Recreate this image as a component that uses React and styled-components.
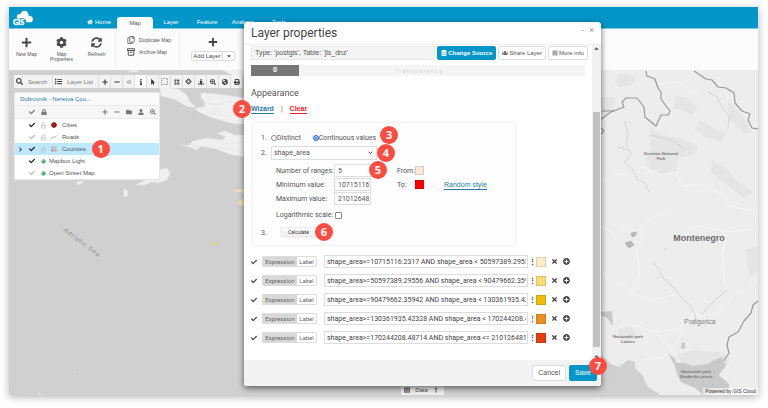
import { useState } from 'react';
import styled, { createGlobalStyle } from 'styled-components';
import {
    FaBars, FaCaretDown, FaCaretUp, FaCheck, FaCog, FaDatabase, FaFolder, FaGlobeAmericas,
    FaHome, FaInfo, FaList, FaLock, FaLongArrowAltUp, FaMinus, FaMousePointer, FaPlus,
    FaPlusCircle, FaPrint, FaRegCopy, FaSearch, FaSearchPlus, FaStreetView, FaSyncAlt, FaTh, FaTimes,
    FaUser, FaUsers, FaDrawPolygon, FaAngleDoubleLeft, FaChevronRight
} from 'react-icons/fa';

const TABS = ['Home', 'Map', 'Layer', 'Feature', 'Analysis', 'Tools'];

const MAP_TOOLS = [
    { name: 'Zoom in', icon: <FaPlus /> },
    { name: 'Zoom out', icon: <FaMinus /> },
    { name: 'Previous view', icon: <FaAngleDoubleLeft color='#999' /> },
    { name: 'Info', icon: <FaInfo />, active: true },
    { name: 'Select', icon: <FaMousePointer /> },
    { name: 'Select area', icon: <DashedBox /> },
    { name: 'Measure', icon: <FaDrawPolygon /> },
    { name: 'Pan', icon: <PanIcon /> },
    { name: 'Street view', icon: <FaStreetView /> },
    { name: 'Zoom to area', icon: <FaSearchPlus /> },
    { name: 'Full extent', icon: <FaGlobeAmericas /> },
    { name: 'Print', icon: <FaPrint /> },
];

const layers = [
    { name: 'Cities', checked: true, lock: true, symbol: 'point' },
    { name: 'Roads', checked: false, lock: true, symbol: 'line' },
    { name: 'Counties', checked: true, lock: true, symbol: 'area', selected: true, step: 1 },
    { name: 'Mapbox Light', checked: true, symbol: 'base' },
    { name: 'Open Street Map', checked: false, symbol: 'base' },
];

const rules = [
    { expression: 'shape_area>=10715116.2317 AND shape_area < 50597389.29556', color: '#fdedc4' },
    { expression: 'shape_area>=50597389.29556 AND shape_area < 90479662.35942', color: '#f7dd72' },
    { expression: 'shape_area>=90479662.35942 AND shape_area < 130361935.42328', color: '#eebd0a' },
    { expression: 'shape_area>=130361935.42328 AND shape_area < 170244208.48714', color: '#ea9020' },
    { expression: 'shape_area>=170244208.48714 AND shape_area <= 210126481', color: '#e53d0e' },
];


function DashedBox() {
    return <svg viewBox='0 0 16 16' width='7' height='7'>
        <rect x='1' y='1' width='14' height='14' fill='none' stroke='#888' strokeWidth='2' strokeDasharray='3 2' />
    </svg>;
}

function PanIcon() {
    return <svg viewBox='0 0 16 16' width='7' height='7' fill='none' stroke='currentColor' strokeWidth='2'>
        <path d='M5 4.5l3-3 3 3zM5 11.5l3 3 3-3zM4.500 5l-3 3 3 3zM11.500 5l3 3-3 3z' />
    </svg>;
}

function UnlockIcon() {
    return <svg viewBox='0 0 12 16' width='5' height='7' fill='none' stroke='currentColor' strokeWidth='1.8'>
        <path d='M1 8h10v6H1zM3 8V4.500a3 3 0 0 1 6 0V5' />
    </svg>;
}

function ArchiveIcon() {
    return <svg viewBox='0 0 16 16' width='8' height='8' fill='none' stroke='#555' strokeWidth='2'>
        <path d='M1 1.5h14v3.5H1zM2.5 5v9.500h11V5M5.5 8.500h5' />
    </svg>;
}

function Logo() {
    return <svg viewBox='0 0 63 48' width='21' height='16' role='img' aria-label='GIS Cloud'>
        <path fill='#fff' d='M13 26c-5-10 3-16 9-13C24 2 39-2 45 9c3 5 2 8 1 10 8-3 15 3 14 10-1 5-5 8-9 8H40c0-13-16-16-22-11z' />
        <text x='0' y='44' fontFamily='Lato, sans-serif' fontWeight='900' fontSize='21' fill='#fff' stroke='#fff' strokeWidth='1'>GIS</text>
    </svg>;
}

const SYMBOLS = {
    point: <svg viewBox='0 0 14 14' width='6' height='6'><circle cx='7' cy='7' r='5.5' fill='#c8141b' stroke='#5a0000' strokeWidth='2' /></svg>,
    line: <svg viewBox='0 0 14 14' width='6' height='6'><path d='M1 10l4-3 3 1 5-4' fill='none' stroke='#888' strokeWidth='1.6' /></svg>,
    area: <svg viewBox='0 0 14 14' width='6' height='6'>
        <path d='M1 1h5v4H1z' fill='#e98a8a' /><path d='M8 1h5v5H8z' fill='#9cc58a' />
        <path d='M1 7h5v6H1z' fill='#a988d0' /><path d='M8 8h5v5H8z' fill='#e99850' />
    </svg>,
    base: <svg viewBox='0 0 14 14' width='5' height='5'><circle cx='7' cy='7' r='6' fill='#4caf6e' /><circle cx='5' cy='5' r='2' fill='#a9dfb8' /></svg>,
};

function BaseMap() {
    return <MapSvg viewBox='9 70 749 325' preserveAspectRatio='xMidYMid slice'>
        <rect x='0' y='0' width='768' height='408' fill='#d0d0d0' />
        <g fill='#f0f0f0' stroke='#e2e2e2' strokeWidth='0.6'>
            <path d='M128 72l4-2h5l1 2zM222 70h24v7l-12-1-8-4z' />
            <path d='M160 87l18 2 9 6 3 7 5 4-1 2-8-2-12-7-13-3z' />
            <path d='M201 93l14 1 31 4v26l-11 0-12-3-13-4-13-6-2-3 9-1 1-5-4-4z' />
            <path d='M217 133l9-2 8 4 12 0v22l-14-2-16-6-10-2-17-2 4-4 14-3 15 2 4-3z' />
            <path d='M182 145l9 0 9 2-3 3-5-2z' />
            <path d='M136 185l13-7 10-3v-5l8-2 3 5-3 7-8 3-8-1-6 3z' />
            <path d='M76 182l8-1-2 2-4 2zM124 188l4 4-1 4-3 1z' />
            <path d='M38 394l2-1v2zM79 372h1v1z' />
        </g>
        <g fill='none' stroke='#e6e6e6' strokeWidth='0.8'>
            <path d='M203 102l14 3 12-4 16 6M207 112l18 4 19-3M216 141l12 3 17-2M205 145l22 4 18 4' />
        </g>
        <g fill='#f6e3bb'>
            <path d='M233 190h3v1h-3zM236 190l4-1 5 1v2h-8zM238 202l5-3 3 1v5l-5 1-3-2z' />
            <path d='M211 246l2-3 4-1 1 3-3-1-2 1z' fill='#ecd25c' />
        </g>

        <path d='M596 70h170v330h-104l-4-7-10-6-6-12-7-7v-6l-7-2-9 7-8-3-5-5-10-8z' fill='#ededed' />
        <g fill='#e5e5e5'>
            <path d='M650 128l12 7 20 3 17 10-8 8-12 1-4 15-11 3-14-6-5-9 6-12z' />
            <path d='M601 97l12 0 3 8-8 8-7 1zM618 74l10 0 8 5-4 6-12 2-5-5zM676 95l12 3 9 10-5 7-10-5-9-1z' />
            <path d='M700 120l14 9 12 4-5 9-16-5-10-7zM728 100l14 16 10 16-6 3-17-16zM712 160l14 8 12 14 14 10-8 6-16-12-17-14z' />
            <path d='M745 250l13-5v26l-9 5zM618 330l12-4 6 8-8 8-10-4zM672 356l22-6 24 2 12 6-6 12-50-5z' />
        </g>
        <g fill='none' stroke='#f5f5f5' strokeWidth='1'>
            <path d='M601 183l12-10 20 3 8-9 20 8 14-3 8 14 16-2 24 10 6 12 20 4 10-6M601 225l14 10 8-9 16 6 12-14 22-8' />
            <path d='M603 272l17 12 14 10 20 6 22-6 12 8 10 14 20-3 14-16 16-10 18-12M632 294l8-22-4-20 8-20' />
            <path d='M612 330l18-6 26 8 22-3 16-14M656 332l16 18 10 16M641 360l22-2 16-18 14-28M726 235l-4 24 3 26M700 96l-22-14-20 2M672 240l26-14 30 6 26-3' />
        </g>
        <g fill='none' stroke='#d3d3d3' strokeWidth='0.9'>
            <path d='M625 121l3 14-2 10 5 8-6 9 8 8 4 9 8 4 4 9M617 147l12 3M708 92l8 4 8 14 5 6-1 12' />
            <path d='M653 262l6 8 4 8 10 9 8 10 10 9 5 10-3 10M727 290l-14 12-12 13M650 135l18 4 16 9' />
        </g>
        <g fill='none' stroke='#999' strokeWidth='1.2' strokeLinejoin='round'>
            <path d='M646 71l1 5 8 3 3 9 3 4v7l5 7 4 5-2 4h-7l-5 11-11-9-1-10-7-9h-11l-4 4 2 5-13 5-14 10M601 128l3 3-3 3' />
            <path d='M694 71l12 8 6 1 6 7 8 1 8 5 1 10 7 8 8 3-2 6 4 8 7 1' />
            <path d='M758 301l-5 4-2 8-7 8-6 11-9 5-2 8 2 8-9 13-15 18 5 6' />
        </g>
        <g fill='#c9c9c9'>
            <path d='M601 312l11-1 1 15-6-8-6-3z' />
            <path d='M668 353l6 5 2 5 9 0 8 3 14-2 7-4 8-3 4 8-7 10 10 9v8l-26 3-8-7-14-6-4-8-2-8z' />
            <path d='M682 342l3 1v6l-4-1z' />
        </g>
        <path d='M631 233l6-1-2 4-3 1zM625 243l6-2 3 4-5 3zM664 248l3 2' fill='#b8b8b8' stroke='#b0b0b0' strokeWidth='0.6' />

        <g fontFamily='"Liberation Sans", Arial, sans-serif' textAnchor='middle' fill='#777'>
            <text x='81' y='244' fontSize='6' letterSpacing='1' transform='rotate(37 81 244)' fill='#888'>Adriatic Sea</text>
            <text x='699' y='241' fontSize='9' fontWeight='bold' fill='#6e6e6e'>Montenegro</text>
            <text x='700' y='324' fontSize='7' fill='#808080'>Podgorica</text>
            <g fontSize='4' fontWeight='bold'>
                <text x='661' y='155'>Durmitor National</text>
                <text x='661' y='160'>Park</text>
                <text x='608' y='112' fontWeight='normal'>ational</text>
                <text x='628' y='338'>Nacionalni park</text>
                <text x='628' y='343'>Lovćen</text>
                <text x='696' y='373'>Nacionalni park</text>
                <text x='696' y='378'>Skadarsko jezero</text>
            </g>
        </g>
    </MapSvg>;
}


export default function App() {
    const [selectedTab, setSelectedTab] = useState('Map');

    const ribbon = <Ribbon>
        <RibbonGroup>
            <BigButton><FaPlus />New Map</BigButton>
            <BigButton><FaCog />Map Properties</BigButton>
            <BigButton><FaSyncAlt />Refresh</BigButton>
        </RibbonGroup>
        <RibbonList>
            <SmallButton><FaRegCopy />Duplicate Map</SmallButton>
            <SmallButton><ArchiveIcon />Archive Map</SmallButton>
        </RibbonList>
        <AddLayer>
            <FaPlus />
            <SplitButton>
                <button>Add Layer</button>
                <button aria-label='More layer types'><FaCaretDown /></button>
            </SplitButton>
        </AddLayer>
    </Ribbon>;

    return <Page>
        <GlobalStyle />
        <Frame>
            <Header>
                <LogoLink href='#'><Logo /></LogoLink>
                {TABS.map((tab) =>
                    <Tab key={tab} $isActive={tab === selectedTab} onClick={() => setSelectedTab(tab)}>
                        {tab === 'Home' && <FaHome />}{tab}
                    </Tab>
                )}
            </Header>
            {ribbon}
            <MapArea>
                <BaseMap />
                <Toolbar>
                    <ToolButton><FaSearch /><span>Search</span></ToolButton>
                    <ToolButton><FaList /><span>Layer List</span></ToolButton>
                    {MAP_TOOLS.map((tool) =>
                        <IconTool key={tool.name} aria-label={tool.name} $isActive={tool.active}>{tool.icon}</IconTool>
                    )}
                </Toolbar>
                <LayerPanel />
                <Credits>Powered by GIS Cloud</Credits>
                <DataTab><FaTh />Data<FaLongArrowAltUp /></DataTab>
            </MapArea>
            <LayerProperties />
        </Frame>
    </Page>;
}

function LayerPanel() {
    return <Panel>
        <PanelTitle href='#'>Dubrovnik - Neretva Cou...</PanelTitle>
        <PanelTools>
            <FaCheck />
            <FaLock />
            <Spacer />
            <FaPlus />
            <FaMinus />
            <FaFolder />
            <FaUser />
            <FaSearchPlus />
        </PanelTools>
        <Layers>
            {layers.map((layer) => <LayerRow key={layer.name} $selected={layer.selected}>
                <Marker>{layer.selected && <FaChevronRight />}</Marker>
                <Cell $width={12} $muted={!layer.checked}><FaCheck /></Cell>
                {layer.lock && <Cell $width={10} $muted><UnlockIcon /></Cell>}
                <Cell $width={layer.lock ? 9 : 6}>{SYMBOLS[layer.symbol]}</Cell>
                <LayerName>
                    {layer.name}
                    {layer.step && <Badge $x={6} $y={-4}>{layer.step}</Badge>}
                </LayerName>
            </LayerRow>)}
        </Layers>
    </Panel>;
}

function LayerProperties() {
    const [mode, setMode] = useState('continuous');

    return <Dialog role='dialog' aria-label='Layer properties'>
        <DialogHeader>
            <h1>Layer properties</h1>
            <button aria-label='Minimize'>-</button>
            <button aria-label='Close'>×</button>
        </DialogHeader>
        <DialogMain>
            <DialogBody>
                <SourceRow>
                    <SourceInput aria-label='Source' readOnly value="Type: 'postgis', Table: 'jls_dnz'" />
                    <Button $primary $bold><FaDatabase />Change Source</Button>
                    <Button><FaUsers />Share Layer</Button>
                    <Button><FaBars />More info</Button>
                </SourceRow>
                <Transparency>
                    <b>0</b>
                    <span>Transparency</span>
                </Transparency>
                <h2>Appearance</h2>
                <Links>
                    <Anchor>
                        <Link href='#' $bold>Wizard</Link>
                        <Badge $x={-41} $y={-4}>2</Badge>
                    </Anchor>
                    <i>|</i>
                    <Link href='#' $bold $danger>Clear</Link>
                </Links>

                <Wizard>
                    <Step>
                        <span>1.</span>
                        <RadioLabel>
                            <input type='radio' name='mode' checked={mode === 'distinct'} onChange={() => setMode('distinct')} />
                            Distinct
                        </RadioLabel>
                        <RadioLabel>
                            <input type='radio' name='mode' checked={mode === 'continuous'} onChange={() => setMode('continuous')} />
                            Continuous values
                            <Badge $x={4} $y={-7}>3</Badge>
                        </RadioLabel>
                    </Step>
                    <Step>
                        <span>2.</span>
                        <Anchor>
                            <Select aria-label='Column' defaultValue='shape_area'><option>shape_area</option></Select>
                            <Badge $x={0} $y={-2}>4</Badge>
                        </Anchor>
                    </Step>
                    <Fields>
                        <label htmlFor='ranges'>Number of ranges:</label>
                        <Anchor>
                            <Input id='ranges' defaultValue='5' />
                            <Badge $x={-2} $y={-3}>5</Badge>
                        </Anchor>
                        <ColorLabel>From:</ColorLabel>
                        <Swatch aria-label='From color' $color='#fbe8da' />
                        <span />
                        <label htmlFor='min'>Minimum value:</label>
                        <Input id='min' defaultValue='10715116' />
                        <ColorLabel>To:</ColorLabel>
                        <Swatch aria-label='To color' $color='#f00' />
                        <Link href='#'>Random style</Link>
                        <label htmlFor='max'>Maximum value:</label>
                        <Input id='max' defaultValue='21012648' />
                    </Fields>
                    <LogScale>
                        <label htmlFor='log'>Logarithmic scale:</label>
                        <input id='log' type='checkbox' />
                    </LogScale>
                    <Step>
                        <span>3.</span>
                        <Anchor>
                            <Calculate>Calculate</Calculate>
                            <Badge $x={-2} $y={-4}>6</Badge>
                        </Anchor>
                    </Step>
                </Wizard>

                <Rules>
                    {rules.map((rule) => <Rule key={rule.color}>
                        <FaCheck />
                        <Segment>
                            <SegmentButton $isActive>Expression</SegmentButton>
                            <SegmentButton>Label</SegmentButton>
                        </Segment>
                        <RuleInput aria-label='Expression' defaultValue={rule.expression} />
                        <Dots aria-label='Options'>⋮</Dots>
                        <Swatch aria-label='Rule color' $color={rule.color} $large />
                        <RuleAction aria-label='Remove rule'><FaTimes /></RuleAction>
                        <RuleAction aria-label='Add rule'><FaPlusCircle /></RuleAction>
                    </Rule>)}
                </Rules>
            </DialogBody>
            <Scrollbar>
                <FaCaretUp />
                <Thumb />
                <FaCaretDown />
            </Scrollbar>
        </DialogMain>
        <DialogFooter>
            <Button $large>Cancel</Button>
            <Anchor>
                <Button $large $primary>Save</Button>
                <Badge $x={-8} $y={-8}>7</Badge>
            </Anchor>
        </DialogFooter>
    </Dialog>;
}


const GlobalStyle = createGlobalStyle`
*{
    box-sizing: border-box;
}
body{
    margin: 0;
    background: #fff;
    font: 7px/10px "Liberation Sans", Arial, sans-serif;
    color: #555;
}
button, input, select{
    font: inherit;
    color: inherit;
    margin: 0;
    padding: 0;
    border: 0;
    border-radius: 0;
    background: none;
}
button{
    cursor: pointer;
}
h1, h2{
    margin: 0;
    font-weight: 400;
}
svg{
    display: block;
    flex: none;
}
`;

const Page = styled.div`
    display: flex;
    min-height: 100vh;
    padding: 7px 10px 13px 9px;
`;

const Frame = styled.div`
    position: relative;
    flex: 1;
    display: flex;
    flex-direction: column;
    box-shadow: 0 2px 8px rgba(0, 0, 0, .3);
`;

const Header = styled.header`
    display: flex;
    align-items: flex-end;
    height: 22px;
    background: #0296c9;
    border-bottom: 1px solid #7fcbe4;
`;

const LogoLink = styled.a`
    align-self: center;
    padding-left: 4px;
    margin-right: 47px;
`;

const Tab = styled.button`
    display: flex;
    align-items: center;
    justify-content: center;
    gap: 2px;
    width: 36px;
    height: 12px;
    font-size: 6px;
    color: #fff;

    ${({ $isActive }) => $isActive && `
        background: #fcfcfc;
        color: #555;
        border-radius: 3px 3px 0 0;
        margin-bottom: -1px;
    `}
`;

const Ribbon = styled.div`
    display: flex;
    height: 41px;
    padding: 3px 0;
    background: #fcfcfc;
    font-size: 5px;
    line-height: 5px;
`;

const RibbonGroup = styled.div`
    display: flex;
    width: 107px;
    border-right: 1px solid #eee;
`;

const BigButton = styled.button`
    display: flex;
    flex-direction: column;
    align-items: center;
    gap: 4px;
    width: 35px;
    padding: 5px 4px 0;

    svg{
        font-size: 11px;
        color: #484848;
    }
`;

const RibbonList = styled.div`
    display: flex;
    flex-direction: column;
    gap: 4px;
    width: 64px;
    padding: 4px 0 0 11px;
    border-right: 1px solid #eee;
`;

const SmallButton = styled.button`
    display: flex;
    align-items: center;
    gap: 4px;
    height: 8px;

    svg{
        font-size: 8px;
    }
`;

const AddLayer = styled.div`
    display: flex;
    flex-direction: column;
    align-items: center;
    gap: 4px;
    padding: 5px 0 0 11px;
    font-size: 10px;
    color: #484848;
`;

const SplitButton = styled.div`
    display: flex;
    height: 10px;
    border: 1px solid #ddd;
    border-radius: 1px;
    background: #fff;
    font-size: 6px;

    button{
        display: flex;
        align-items: center;
        justify-content: center;
        width: 30px;
        white-space: nowrap;
    }
    button + button{
        width: 12px;
        border-left: 1px solid #ddd;
    }
`;

const MapArea = styled.main`
    position: relative;
    flex: 1;
    display: flex;
    flex-direction: column;
    align-items: flex-start;
    padding: 5px 0 0 5px;
    overflow: hidden;
`;

const MapSvg = styled.svg`
    position: absolute;
    inset: 0;
    width: 100%;
    height: 100%;
`;

const Toolbar = styled.div`
    position: relative;
    display: flex;
    height: 13px;
    background: #f3f3f3;
    color: #333;
`;

const ToolButton = styled.button`
    display: flex;
    align-items: center;
    gap: 5px;
    padding: 0 5px 0 2px;
    border-right: 1px solid #ddd;
    font-size: 6px;
    color: #333;

    span{
        color: #777;
    }
    svg{
        font-size: 7px;
    }
`;

const IconTool = styled.button`
    display: flex;
    align-items: center;
    justify-content: center;
    width: 12px;
    border-right: 1px solid #ddd;
    background: ${({ $isActive }) => $isActive ? '#fff' : 'transparent'};
    font-size: 6px;
`;

const Panel = styled.aside`
    position: relative;
    width: 146px;
    margin-top: 4px;
    background: #fff;
    border: 1px solid #e6e6e6;
    font-size: 6px;
`;

const PanelTitle = styled.a`
    display: block;
    padding: 0 5px;
    line-height: 12px;
    background: #fafafa;
    border-bottom: 1px solid #e8e8e8;
    color: #2580a6;
    text-decoration: none;
`;

const PanelTools = styled.div`
    display: flex;
    align-items: center;
    gap: 6px;
    height: 13px;
    padding: 0 3px 0 14px;
    background: #f6f6f6;
    border-bottom: 1px solid #e8e8e8;
    color: #777;
`;

const Spacer = styled.span`
    flex: 1;
`;

const Layers = styled.ul`
    margin: 0;
    padding: 0;
    list-style: none;
`;

const LayerRow = styled.li`
    display: flex;
    align-items: center;
    height: 12px;
    background: ${({ $selected }) => $selected ? '#bde9fe' : 'transparent'};
`;

const Marker = styled.span`
    width: 14px;
    padding-left: 3px;
    font-size: 5px;
    color: #222;
`;

const Cell = styled.span`
    width: ${({ $width }) => $width}px;
    color: ${({ $muted }) => $muted ? '#bbb' : '#222'};
`;

const LayerName = styled.span`
    position: relative;
    padding-left: 2px;
`;

// numbered marker on the right edge of its parent
const Badge = styled.span`
    position: absolute;
    z-index: 2;
    left: 100%;
    top: 0;
    margin-left: ${({ $x }) => $x}px;
    margin-top: ${({ $y }) => $y}px;
    width: 18px;
    height: 18px;
    border-radius: 50%;
    background: #fe4c40;
    color: #fff;
    font: bold 11px/18px "Open Sans", sans-serif;
    text-align: center;
`;

const Credits = styled.div`
    position: absolute;
    right: 0;
    bottom: 0;
    padding: 0 2px;
    background: rgba(255, 255, 255, .6);
    font-size: 5px;
    line-height: 7px;
    color: #333;
`;

const DataTab = styled.button`
    position: absolute;
    left: 392px;
    bottom: 0;
    display: flex;
    align-items: center;
    justify-content: space-between;
    width: 43px;
    height: 10px;
    padding: 0 5px 0 3px;
    background: #f0f0f0;
    font-size: 6px;
`;

const Dialog = styled.section`
    position: absolute;
    left: 235px;
    top: 15px;
    width: 357px;
    background: #fff;
    border-radius: 3px;
    box-shadow: 0 2px 6px rgba(0, 0, 0, .6);
    font-family: Roboto, sans-serif;
`;

const DialogHeader = styled.header`
    display: flex;
    align-items: center;
    height: 23px;
    padding: 0 7px;
    border-bottom: 1px solid #eee;
    gap: 5px;

    h1{
        flex: 1;
        font-size: 12px;
        line-height: 14px;
        color: #444;
    }
    button{
        align-self: flex-start;
        padding-top: 3px;
        font-size: 9px;
        color: #999;
    }
`;

const DialogMain = styled.div`
    display: flex;
`;

const DialogBody = styled.div`
    flex: 1;
    min-width: 0;
    padding: 1px 4px 16px 7px;

    h2{
        margin: 12px 0 5px;
        font-size: 9px;
        line-height: 11px;
    }
`;

const SourceRow = styled.div`
    display: flex;
    gap: 2px;
    height: 14px;
`;

const SourceInput = styled.input`
    flex: 1;
    min-width: 0;
    padding: 0 3px;
    background: #f4f4f4;
    border: 1px solid #e8e8e8;
    font-family: "Liberation Sans", Arial, sans-serif;
`;

const Button = styled.button`
    display: flex;
    align-items: center;
    justify-content: center;
    gap: 1px;
    padding: 0 3px;
    border: 1px solid #ddd;
    border-radius: 2px;
    background: #fff;
    font-family: "Liberation Sans", Arial, sans-serif;
    font-size: 6px;
    white-space: nowrap;

    ${({ $large }) => $large && `
        height: 16px;
        padding: 0 5px;
        font-size: 7px;
    `}
    ${({ $primary }) => $primary && `
        background: #0296c9;
        border-color: #0296c9;
        color: #fff;
    `}
    ${({ $bold }) => $bold && `
        font-weight: bold;
    `}
`;

const Transparency = styled.div`
    display: flex;
    margin: 5px 3px 0 0;
    background: #f4f4f4;
    line-height: 11px;
    text-align: center;

    b{
        width: 48px;
        background: #777;
        color: #fff;
    }
    span{
        flex: 1;
        padding-right: 46px;
        font-size: 6px;
        letter-spacing: 1px;
        color: #d8d8d8;
    }
`;

const Links = styled.div`
    display: flex;
    gap: 7px;

    i{
        font-style: normal;
    }
`;

const Anchor = styled.div`
    position: relative;
    display: flex;
`;

const Link = styled.a`
    color: ${({ $danger }) => $danger ? '#ee1c25' : '#2580a6'};
    font-family: "Liberation Sans", Arial, sans-serif;
    font-weight: ${({ $bold }) => $bold ? 'bold' : 'normal'};
    text-decoration: none;
    border-bottom: 1px solid currentColor;
    line-height: 9px;
`;

const Wizard = styled.div`
    width: 266px;
    margin-top: 8px;
    padding: 7px 9px 5px;
    border: 1px solid #f2f2f2;
    border-radius: 4px;
    background: #fdfdfd;
`;

const Step = styled.div`
    display: flex;
    align-items: center;
    height: 15px;

    > span{
        width: 10px;
    }
`;

const RadioLabel = styled.label`
    position: relative;
    display: flex;
    align-items: center;
    margin-right: 12px;

    input{
        appearance: none;
        width: 6px;
        height: 6px;
        border: 1px solid #888;
        border-radius: 50%;
        background: #fff;
    }
    input:checked{
        border-color: #1a73e8;
        background: #1a73e8;
        box-shadow: inset 0 0 0 1px #dbe9fd;
    }
`;

const Select = styled.select`
    appearance: none;
    width: 106px;
    height: 14px;
    padding: 0 2px;
    border: 1px solid #ddd;
    background: #fff url("data:image/svg+xml,%3Csvg xmlns='http://www.w3.org/2000/svg' viewBox='0 0 8 6'%3E%3Cpath d='M1 1l3 3 3-3' fill='none' stroke='%23333' stroke-width='1.5'/%3E%3C/svg%3E") no-repeat right 3px center / 5px 4px;
`;

const Fields = styled.div`
    display: grid;
    grid-template-columns: 58px 37px 44px 29px auto;
    grid-auto-rows: 13px;
    align-items: center;
    justify-content: start;
    gap: 1px 0;
    padding: 4px 0 0 15px;
`;

const ColorLabel = styled.span`
    padding-left: 26px;
`;

const Input = styled.input`
    width: 37px;
    height: 13px;
    padding: 0 1px 0 3px;
    border: 1px solid #ddd;
    background: #fff;
`;

const Swatch = styled.button`
    flex: none;
    width: ${({ $large }) => $large ? 10 : 9}px;
    height: ${({ $large }) => $large ? 10 : 9}px;
    border: 1px solid rgba(0, 0, 0, .12);
    background: ${({ $color }) => $color};
`;

const LogScale = styled.div`
    display: flex;
    align-items: center;
    gap: 2px;
    height: 20px;
    padding-left: 15px;

    input{
        appearance: none;
        width: 7px;
        height: 7px;
        border: 1px solid #888;
        border-radius: 1px;
        background: #fff;
    }
    input:checked{
        background: #1a73e8;
    }
`;

const Calculate = styled.button`
    width: 37px;
    height: 11px;
    margin-left: 9px;
    border: 1px solid #eee;
    border-radius: 3px;
    background: linear-gradient(#fdfdfd, #ececec);
    font-size: 5px;
    line-height: 9px;
    color: #333;
`;

const Rules = styled.div`
    display: flex;
    flex-direction: column;
    gap: 6px;
    padding: 9px 18px 0 0;
`;

const Rule = styled.div`
    display: flex;
    align-items: center;
    height: 13px;
    color: #444;

    > svg{
        font-size: 6px;
    }
`;

const Segment = styled.div`
    display: flex;
    width: 55px;
    margin: 0 7px 0 5px;
    border: 1px solid #ddd;
    border-radius: 1px;
    font-size: 6px;
    line-height: 9px;
`;

const SegmentButton = styled.button`
    flex: 1 0 auto;
    color: #666;
    background: ${({ $isActive }) => $isActive ? '#d8d8d8' : '#fff'};
`;

const RuleInput = styled.input`
    flex: 1;
    min-width: 0;
    height: 13px;
    padding: 0 1px 0 2px;
    border: 1px solid #ddd;
    background: #fff;
`;

const Dots = styled.button`
    width: 8px;
    padding: 0 1px;
    font-weight: bold;
    text-align: left;
`;

const RuleAction = styled.button`
    display: flex;
    margin-left: 5px;
`;

const Scrollbar = styled.div`
    display: flex;
    flex-direction: column;
    align-items: center;
    width: 9px;
    background: #f1f1f1;
    color: #555;
`;

const Thumb = styled.div`
    flex: 1;
    width: 7px;
    margin: 60px 0 6px;
    background: #c1c1c1;
`;

const DialogFooter = styled.footer`
    display: flex;
    align-items: center;
    justify-content: flex-end;
    gap: 3px;
    height: 26px;
    padding: 0 4px;
    background: #f3f3f3;
    border-radius: 0 0 3px 3px;
`;
